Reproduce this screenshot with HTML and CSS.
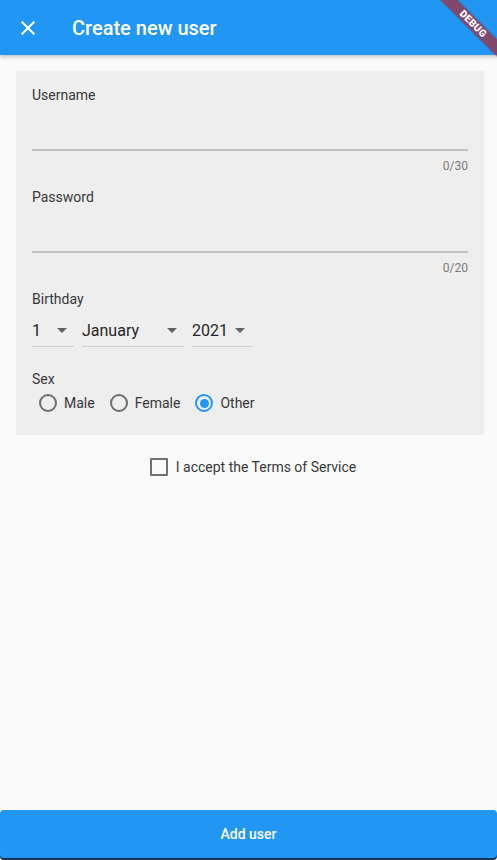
FILE: index.html
```html
<!DOCTYPE html>
<html>
<head>
<meta charset="utf-8">
<link rel="stylesheet" href="styles.css">
</head>
<body>
<div class="app">
  <header class="appbar">
    <svg class="close" width="24" height="24" viewBox="0 0 24 24"><path fill="#fff" d="M19 6.41L17.59 5 12 10.59 6.41 5 5 6.41 10.59 12 5 17.59 6.41 19 12 13.41 17.59 19 19 17.59 13.41 12z"/></svg>
    <div class="title">Create new user</div>
  </header>
  <main class="content">
    <section class="card">
      <div class="label">Username</div>
      <div class="input"></div>
      <div class="counter">0/30</div>
      <div class="label gap">Password</div>
      <div class="input"></div>
      <div class="counter">0/20</div>
      <div class="label gap">Birthday</div>
      <div class="dropdowns">
        <div class="dropdown w-day"><span class="value">1</span><span class="arrow"></span></div>
        <div class="dropdown w-month"><span class="value">January</span><span class="arrow"></span></div>
        <div class="dropdown w-year"><span class="value">2021</span><span class="arrow"></span></div>
      </div>
      <div class="label sex">Sex</div>
      <div class="radios">
        <div class="radio-item"><span class="radio"></span><span class="rlabel">Male</span></div>
        <div class="radio-item"><span class="radio"></span><span class="rlabel">Female</span></div>
        <div class="radio-item"><span class="radio checked"></span><span class="rlabel">Other</span></div>
      </div>
    </section>
    <div class="terms">
      <span class="checkbox"></span>
      <span class="terms-label">I accept the Terms of Service</span>
    </div>
  </main>
  <button class="add">Add user</button>
  <div class="debug"><span>DEBUG</span></div>
</div>
</body>
</html>
```
FILE: styles.css
```css
* { box-sizing: border-box; }
html, body {
  margin: 0;
  padding: 0;
  width: 497px;
  height: 860px;
  overflow: hidden;
  background: #fafafa;
  font-family: Roboto, "Liberation Sans", sans-serif;
}
.app {
  position: relative;
  display: flex;
  flex-direction: column;
  height: 860px;
  overflow: hidden;
  background: #fafafa;
}
.appbar {
  height: 55px;
  flex: 0 0 55px;
  background: #2196f3;
  display: flex;
  align-items: center;
  padding-left: 16px;
  box-shadow: 0 2px 4px rgba(0,0,0,0.22);
  position: relative;
  z-index: 1;
}
.close { display: block; }
.title {
  margin-left: 32px;
  color: #fff;
  font-size: 20px;
  font-weight: 500;
  line-height: 24px;
}
.content {
  flex: 1;
  padding: 16px 13px 0 16px;
}
.card {
  background: #eeeeee;
  padding: 16px 16px 20px;
}
.label {
  font-size: 14px;
  line-height: 16px;
  color: #383838;
}
.label.gap { margin-top: 15px; }
.input {
  height: 48px;
  border-bottom: 2px solid #c2c2c2;
}
.counter {
  margin-top: 7px;
  text-align: right;
  font-size: 12px;
  line-height: 16px;
  color: #7a7a7a;
}
.dropdowns {
  display: flex;
  gap: 8px;
  margin-top: 12px;
}
.dropdown {
  display: flex;
  align-items: center;
  height: 28px;
  padding-bottom: 4px;
  border-bottom: 1px solid #cfcfcf;
}
.w-day { width: 42px; }
.w-month { width: 102px; }
.w-year { width: 60px; }
.value {
  flex: 1;
  font-size: 16px;
  line-height: 24px;
  color: #262626;
}
.arrow {
  width: 24px;
  height: 24px;
  display: flex;
  align-items: center;
  justify-content: center;
}
.arrow::before {
  content: "";
  width: 0;
  height: 0;
  border-left: 5px solid transparent;
  border-right: 5px solid transparent;
  border-top: 5px solid #616161;
}
.label.sex { margin-top: 24px; }
.radios {
  display: flex;
  margin-top: 4px;
  height: 24px;
  align-items: center;
}
.radio-item {
  display: flex;
  align-items: center;
  margin-right: 15px;
}
.radio {
  width: 18px;
  height: 18px;
  margin-left: 7px;
  border: 2px solid #6e6e6e;
  border-radius: 50%;
  display: flex;
  align-items: center;
  justify-content: center;
}
.radio-item + .radio-item .radio { margin-left: 0; }
.radio.checked { border-color: #2196f3; }
.radio.checked::after {
  content: "";
  width: 9px;
  height: 9px;
  border-radius: 50%;
  background: #2196f3;
}
.rlabel {
  margin-left: 7px;
  font-size: 14px;
  line-height: 20px;
  color: #383838;
}
.terms {
  display: flex;
  justify-content: center;
  align-items: center;
  margin-top: 20px;
  height: 24px;
  padding-left: 6px;
}
.checkbox {
  width: 18px;
  height: 18px;
  border: 2px solid #707070;
  border-radius: 1px;
}
.terms-label {
  margin-left: 8px;
  font-size: 14px;
  line-height: 20px;
  color: #383838;
}
.add {
  flex: 0 0 48px;
  height: 48px;
  margin: 0 0 2px;
  width: 497px;
  border: none;
  border-radius: 4px;
  background: #2196f3;
  color: #fff;
  font-family: Roboto, "Liberation Sans", sans-serif;
  font-size: 14px;
  font-weight: 500;
  box-shadow: 0 2px 0 #1c3252;
}
.debug {
  position: absolute;
  left: 413px;
  top: 18px;
  width: 120px;
  height: 12px;
  background: rgba(183, 28, 28, 0.63);
  transform: rotate(45deg);
  display: flex;
  align-items: center;
  justify-content: center;
  z-index: 2;
  box-shadow: 0 0 2px rgba(0,0,0,0.25);
}
.debug span {
  color: #fff;
  font-size: 10px;
  font-weight: 900;
  line-height: 12px;
  letter-spacing: 0.3px;
}
```
